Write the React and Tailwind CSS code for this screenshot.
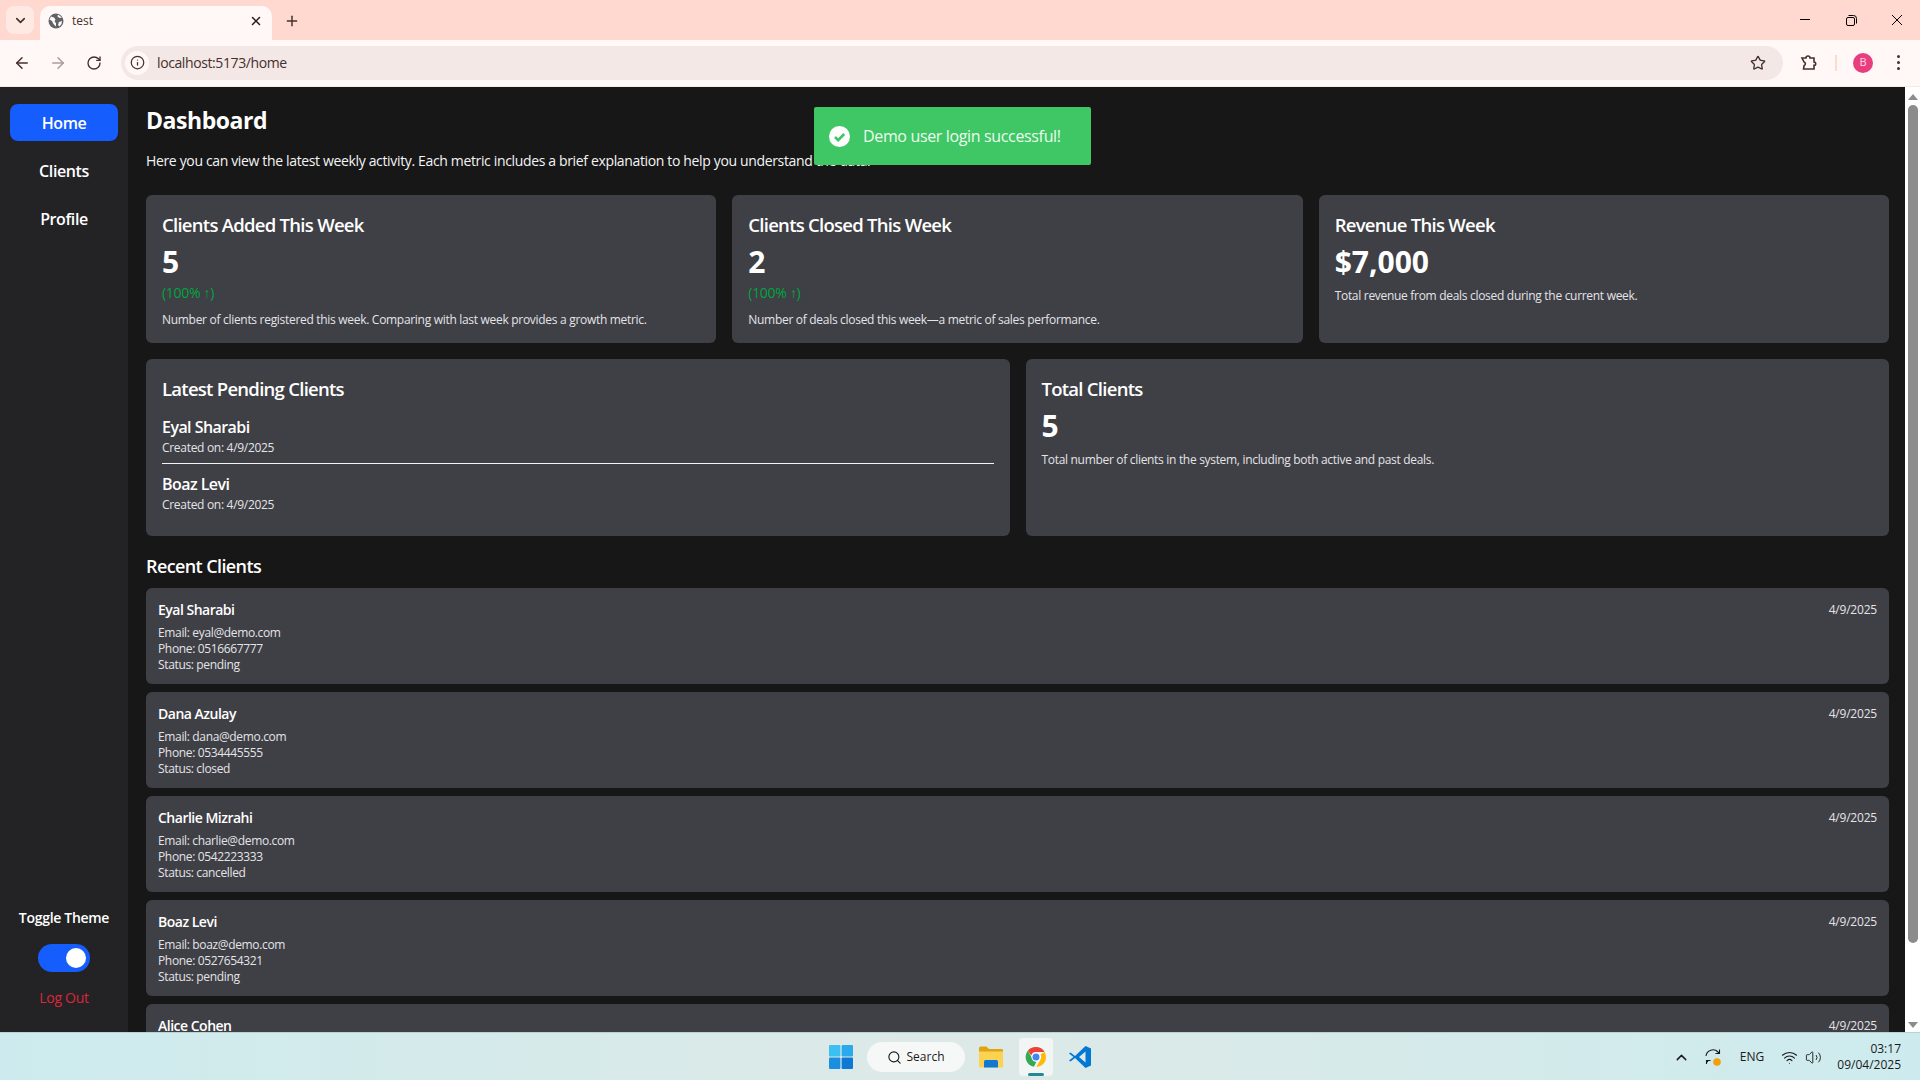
import { ArrowLeft, ArrowRight, RotateCw, Info, Star, X, Plus, ChevronDown, ChevronUp, Search, Wifi, Volume2 } from "lucide-react";

const FONT = "font-['Open_Sans','Noto_Sans',sans-serif]";
const CARD_TITLE = "text-[18.5px] leading-7 font-semibold tracking-[-0.73px]";
const SMALL_TEXT = "text-xs leading-4 text-[#e4e4e7]";

const stats = [
  {
    title: "Clients Added This Week",
    value: "5",
    change: "(100% ↑)",
    text: "Number of clients registered this week. Comparing with last week provides a growth metric.",
  },
  {
    title: "Clients Closed This Week",
    value: "2",
    change: "(100% ↑)",
    text: "Number of deals closed this week—a metric of sales performance.",
  },
  {
    title: "Revenue This Week",
    value: "$7,000",
    text: "Total revenue from deals closed during the current week.",
  },
];

const clients = [
  { name: "Eyal Sharabi", email: "eyal@demo.com", phone: "0516667777", status: "pending" },
  { name: "Dana Azulay", email: "dana@demo.com", phone: "0534445555", status: "closed" },
  { name: "Charlie Mizrahi", email: "charlie@demo.com", phone: "0542223333", status: "cancelled" },
  { name: "Boaz Levi", email: "boaz@demo.com", phone: "0527654321", status: "pending" },
  { name: "Alice Cohen", email: "alice@demo.com", phone: "0501234567", status: "active" },
];

function ChromeBar() {
  return (
    <div className="shrink-0 text-[#45302b]">
      <div className="h-10 bg-[#ffd9d0] flex items-end pl-[6px] relative">
        <div className="w-7 h-7 mb-[6px] rounded-lg bg-[#ffe9e3] flex items-center justify-center">
          <ChevronDown size={15} strokeWidth={2.6} />
        </div>
        <div className="ml-[6px] w-[232px] h-[34px] bg-[#fff8f6] rounded-t-[10px] flex items-center pl-[8px] pr-[8px] pb-[4px]">
          <svg width="16" height="16" viewBox="0 0 16 16">
            <circle cx="8" cy="8" r="7.5" fill="#5f6368" />
            <path d="M3 3.5l3 1 1.5 2-1 2 1.5 1.5v3.5L5.5 11 4 8 1.5 6.5zM10 1.5l-.5 2 2 1.5 2.5-.5zM11 9l3-1-.5 3-2 2.5-1.5-1.5z" fill="#fff8f6" />
          </svg>
          <span className="ml-2 text-xs flex-1">test</span>
          <X size={14} strokeWidth={2.6} className="mr-[1px] text-[#2a1c19]" />
        </div>
        <Plus size={16} strokeWidth={2.2} className="ml-[12px] mb-[11px]" />
        <div className="absolute right-0 top-0 h-10 flex items-center text-black">
          <svg width="46" height="40" viewBox="0 0 46 40" fill="none" stroke="currentColor"><path d="M18 19.5h10" /></svg>
          <svg width="46" height="40" viewBox="0 0 46 40" fill="none" stroke="currentColor"><rect x="18.5" y="17.5" width="8" height="8" rx="1.5" /><path d="M20.5 15.5h5a3 3 0 0 1 3 3v5" /></svg>
          <svg width="46" height="40" viewBox="0 0 46 40" fill="none" stroke="currentColor"><path d="M18 15l10 10M28 15l-10 10" /></svg>
        </div>
      </div>
      <div className="h-[47px] bg-[#fff8f6] flex items-center pb-[1px] border-b border-[#fbe6e0]">
        <ArrowLeft size={18} className="ml-[13px]" />
        <ArrowRight size={18} className="ml-[18px] text-[#ab9d9a]" />
        <RotateCw size={16} className="ml-[19px]" />
        <div className="ml-[19px] w-[1662px] h-[34px] rounded-full bg-[#f3e8e6] flex items-center pl-[4px] pr-[17px]">
          <div className="w-6 h-6 bg-[#fff8f6] rounded-full flex items-center justify-center">
            <Info size={15} />
          </div>
          <span className="ml-[8px] text-sm flex-1 tracking-[-0.4px]">localhost:5173/home</span>
          <Star size={16} strokeWidth={2} />
        </div>
        <svg width="18" height="18" viewBox="0 0 18 18" fill="none" stroke="currentColor" strokeWidth="1.6" className="ml-[17px]">
          <path d="M2 4h4a2 2 0 0 1 4 0h4v4a1.6 1.6 0 0 1 0 3.4V15H3.500l.6-3.400a1.900 1.900 0 0 0 0-3.600z" />
        </svg>
        <div className="ml-[17px] w-[2px] h-4 bg-[#ffd9d0]" />
        <div className="ml-[16px] w-5 h-5 rounded-full bg-[#e83e7f] text-[#ffd6e6] text-[11px] flex items-center justify-center">B</div>
        <div className="ml-[24px] flex flex-col gap-[3px]">
          <span className="w-[3px] h-[3px] rounded-full bg-[#45302b]" />
          <span className="w-[3px] h-[3px] rounded-full bg-[#45302b]" />
          <span className="w-[3px] h-[3px] rounded-full bg-[#45302b]" />
        </div>
      </div>
    </div>
  );
}

function Sidebar() {
  return (
    <aside className="w-32 shrink-0 bg-[#232326] flex flex-col items-center pt-[17px] pb-[24px] text-white">
      <nav className="w-full px-[10px] flex flex-col gap-[11px] text-base font-semibold tracking-[-0.4px]">
        <a className="h-[37px] flex items-center justify-center rounded-lg bg-[#155dfc]">Home</a>
        <a className="h-[37px] flex items-center justify-center rounded-lg">Clients</a>
        <a className="h-[37px] flex items-center justify-center rounded-lg">Profile</a>
      </nav>
      <div className="mt-auto flex flex-col items-center">
        <span className="text-sm font-semibold tracking-[-0.3px]">Toggle Theme</span>
        <div className="mt-[16px] w-[52px] h-7 rounded-full bg-[#155dfc] flex items-center justify-end pr-1">
          <span className="w-5 h-5 rounded-full bg-white" />
        </div>
        <a className="mt-[16px] text-sm text-[#dc2639] tracking-[-0.3px]">Log Out</a>
      </div>
    </aside>
  );
}

function StatCard({ title, value, change, text }) {
  return (
    <div className="bg-[#3f3f46] rounded-md p-4 h-[148px]">
      <h2 className={CARD_TITLE}>{title}</h2>
      <p className="mt-[5px] text-3xl leading-9 font-bold">{value}</p>
      {change && <p className="mt-[3px] text-sm leading-5 text-[#00a63e] tracking-[-0.3px]">{change}</p>}
      <p className={`${SMALL_TEXT} tracking-[-0.3px] ${change ? "mt-[9px]" : "mt-[8px]"}`}>{text}</p>
    </div>
  );
}

function PendingClient({ name }) {
  return (
    <div>
      <p className="text-base leading-6 font-semibold tracking-[-0.55px]">{name}</p>
      <p className={`mt-[1px] ${SMALL_TEXT} tracking-[-0.3px]`}>Created on: 4/9/2025</p>
    </div>
  );
}

function ClientRow({ client }) {
  return (
    <div className="bg-[#3f3f46] rounded-md p-3 h-[96px] shrink-0 flex justify-between">
      <div>
        <p className="text-sm leading-5 font-semibold tracking-[-0.5px]">{client.name}</p>
        <div className={`mt-[5px] ${SMALL_TEXT} tracking-[-0.35px]`}>
          <p>Email: {client.email}</p>
          <p>Phone: {client.phone}</p>
          <p>Status: {client.status}</p>
        </div>
      </div>
      <p className="text-xs leading-5 text-[#e4e4e7] tracking-[-0.2px]">4/9/2025</p>
    </div>
  );
}

function Dashboard() {
  return (
    <main className="flex-1 min-w-0 bg-[#171717] text-white pl-[18px] pr-[16px] pt-[17px] overflow-hidden relative">
      <h1 className="text-[23px] leading-8 font-bold tracking-[-0.45px]">Dashboard</h1>
      <p className="mt-[13px] text-sm leading-6 text-[#f4f4f5] tracking-[-0.35px]">
        Here you can view the latest weekly activity. Each metric includes a brief explanation to help you understand the data.
      </p>

      <div className="mt-[22px] grid grid-cols-3 gap-4">
        {stats.map((s) => (
          <StatCard key={s.title} {...s} />
        ))}
      </div>

      <div className="mt-4 grid grid-cols-2 gap-4">
        <div className="bg-[#3f3f46] rounded-md p-4 h-[177px]">
          <h2 className={CARD_TITLE}>Latest Pending Clients</h2>
          <div className="mt-[12px] pb-[7px] border-b border-[#f4f4f5]">
            <PendingClient name="Eyal Sharabi" />
          </div>
          <div className="mt-[8px]">
            <PendingClient name="Boaz Levi" />
          </div>
        </div>
        <div className="bg-[#3f3f46] rounded-md p-4 h-[177px]">
          <h2 className={CARD_TITLE}>Total Clients</h2>
          <p className="mt-[5px] text-3xl leading-9 font-bold">5</p>
          <p className={`mt-[8px] ${SMALL_TEXT} tracking-[-0.31px]`}>
            Total number of clients in the system, including both active and past deals.
          </p>
        </div>
      </div>

      <h2 className="mt-[16px] text-lg leading-7 font-semibold tracking-[-0.6px]">Recent Clients</h2>
      <div className="mt-2 flex flex-col gap-2">
        {clients.map((c) => (
          <ClientRow key={c.name} client={c} />
        ))}
      </div>

      <div className="absolute left-[686px] top-[20px] w-[277px] h-[58px] bg-[#3ec764] rounded-[2px] flex items-center pl-[15px]">
        <svg width="21" height="21" viewBox="0 0 21 21">
          <circle cx="10.5" cy="10.5" r="10.5" fill="#fff" />
          <path d="M6 11l3.2 3.2L15.2 8" fill="none" stroke="#3ec764" strokeWidth="2.6" />
        </svg>
        <span className="ml-[13px] text-base text-[#ecfbf0] tracking-[-0.35px]">Demo user login successful!</span>
      </div>
    </main>
  );
}

function Scrollbar() {
  return (
    <div className="w-[15px] shrink-0 bg-white flex flex-col items-center">
      <div className="h-[15px] mt-[2px] flex items-center justify-center">
        <div className="border-x-[5px] border-x-transparent border-b-[6px] border-b-[#8c8c8c]" />
      </div>
      <div className="w-[10px] h-[838px] mt-[1px] bg-[#8c8c8c] rounded-full" />
      <div className="mt-auto h-[15px] flex items-center justify-center">
        <div className="border-x-[5px] border-x-transparent border-t-[6px] border-t-[#8c8c8c]" />
      </div>
    </div>
  );
}

function Taskbar() {
  return (
    <div className="h-12 shrink-0 grid grid-cols-3 items-center border-t border-[#b9d3d4] bg-gradient-to-r from-[#cdebee] via-[#dde9e7] to-[#cdebee] text-[#1a1a1a]">
      <div />
      <div className="flex items-center justify-center h-12">
        <svg width="24" height="24" viewBox="0 0 24 24">
          <rect x="0" y="0" width="11.4" height="11.4" rx="1" fill="#3cc0f2" />
          <rect x="12.6" y="0" width="11.4" height="11.4" rx="1" fill="#2aa9ec" />
          <rect x="0" y="12.6" width="11.4" height="11.4" rx="1" fill="#1b8fdf" />
          <rect x="12.6" y="12.6" width="11.4" height="11.4" rx="1" fill="#0f78d4" />
        </svg>
        <div className="ml-[14px] w-[98px] h-[30px] rounded-full bg-[#f6f8f7] flex items-center justify-center gap-[5px] text-xs">
          <Search size={15} strokeWidth={1.8} />
          <span>Search</span>
        </div>
        <svg width="24" height="22" viewBox="0 0 24 22" className="ml-[14px]">
          <path d="M0 2a1.5 1.5 0 0 1 1.5-1.5h6L10 3h13a1 1 0 0 1 1 1v3H0z" fill="#e0a410" />
          <path d="M0 5.500h24V20a1.500 1.500 0 0 1-1.500 1.500h-21A1.500 1.500 0 0 1 0 20z" fill="#fbd252" />
          <path d="M5 15.500a1.500 1.500 0 0 1 1.500-1.500h11a1.500 1.500 0 0 1 1.500 1.500v6H5z" fill="#0f78d4" />
        </svg>
        <div className="ml-[16px] w-[34px] h-[38px] rounded bg-[#f1f5f4] flex items-center justify-center relative">
          <svg width="24" height="24" viewBox="0 0 48 48">
            <path d="M24 4a20 20 0 0 1 17.320 10H24a10 10 0 0 0-9.500 6.900L7.600 11.500A20 20 0 0 1 24 4z" fill="#ea4335" />
            <path d="M41.320 14A20 20 0 0 1 24.500 44l8.300-14.500A10 10 0 0 0 33 19z" fill="#fbbc04" />
            <path d="M7.600 11.500l9 15.500A10 10 0 0 0 24.500 34l-4.600 9.600A20 20 0 0 1 7.600 11.500z" fill="#34a853" />
            <circle cx="24" cy="24" r="9" fill="#fff" />
            <circle cx="24" cy="24" r="7" fill="#4285f4" />
          </svg>
          <span className="absolute bottom-0 w-4 h-[3px] rounded-full bg-[#24879b]" />
        </div>
        <svg width="24" height="24" viewBox="0 0 24 24" className="ml-[15px]">
          <path d="M17.500 1L23 3.500v17L17.500 23 7 13l-4.500 3.500L1 15.500 5.500 12 1 8.500 2.500 7.500 7 11z" fill="#0078d4" />
          <path d="M17.500 6.500L11 12l6.500 5.500z" fill="#dde9e7" />
        </svg>
      </div>
      <div className="flex items-center justify-end pr-[19px] text-xs">
        <ChevronUp size={17} />
        <svg width="18" height="18" viewBox="0 0 18 18" fill="none" stroke="currentColor" strokeWidth="1.1" className="ml-[14px] relative">
          <path d="M2 8a7 7 0 0 1 12-4l1.500 1.500M15.500 1.500v4h-4M2.500 16v-3.500h4M2.500 12.500l1.500 1.500" />
          <circle cx="13" cy="14" r="3.800" fill="#f59e0b" stroke="none" />
        </svg>
        <span className="ml-[18px]">ENG</span>
        <Wifi size={17} strokeWidth={1.5} className="ml-[17px]" />
        <Volume2 size={17} strokeWidth={1.3} className="ml-[7px]" />
        <div className="ml-[15px] text-right leading-[16px]">
          <p>03:17</p>
          <p>09/04/2025</p>
        </div>
      </div>
    </div>
  );
}

export default function App() {
  return (
    <div className={`h-screen w-full overflow-hidden flex flex-col ${FONT}`}>
      <ChromeBar />
      <div className="flex-1 min-h-0 flex">
        <Sidebar />
        <Dashboard />
        <Scrollbar />
      </div>
      <Taskbar />
    </div>
  );
}
